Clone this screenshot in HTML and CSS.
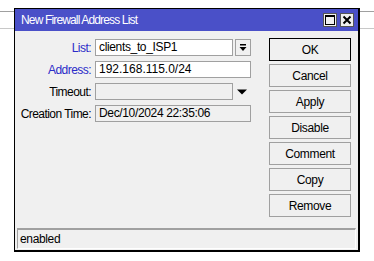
FILE: index.html
```html
<!DOCTYPE html>
<html>
<head>
  <title>New Firewall Address List</title>
  <link rel="stylesheet" href="styles.css">
</head>
<body>
  <div class="window">
    <div class="titlebar">
      <span class="title">New Firewall Address List</span>
      <div class="title-buttons">
        <span class="tbtn">
          <svg width="12" height="12" viewBox="0 0 12 12"><rect x="1.5" y="1.5" width="9" height="9" fill="none" stroke="#000" stroke-width="1"/><line x1="1" y1="2" x2="11" y2="2" stroke="#000" stroke-width="2"/></svg>
        </span>
        <span class="tbtn">
          <svg width="12" height="12" viewBox="0 0 12 12"><path d="M2.5 2.5 L9.5 9.5 M9.5 2.5 L2.5 9.5" stroke="#000" stroke-width="2"/></svg>
        </span>
      </div>
    </div>

    <div class="content">
      <div class="fields">
        <div class="row">
          <label class="label link">List:</label>
          <div class="field short">clients_to_ISP1</div>
          <span class="drop-btn">
            <svg width="10" height="10" viewBox="0 0 10 10"><rect x="2" y="1" width="6" height="1.5" fill="#000"/><path d="M1.5 4 H8.5 L5 8 Z" fill="#000"/></svg>
          </span>
        </div>
        <div class="row">
          <label class="label link">Address:</label>
          <div class="field wide digits">192.168.115.0/24</div>
        </div>
        <div class="row">
          <label class="label">Timeout:</label>
          <div class="field short disabled"></div>
          <span class="arrow">
            <svg width="12" height="8" viewBox="0 0 12 8"><path d="M1 1.5 H11 L6 6.5 Z" fill="#000"/></svg>
          </span>
        </div>
        <div class="row">
          <label class="label">Creation Time:</label>
          <div class="field wide disabled">Dec/10/2024 22:35:06</div>
        </div>
      </div>

      <div class="buttons">
        <button class="btn default">OK</button>
        <button class="btn">Cancel</button>
        <button class="btn">Apply</button>
        <button class="btn">Disable</button>
        <button class="btn">Comment</button>
        <button class="btn">Copy</button>
        <button class="btn">Remove</button>
      </div>
    </div>

    <div class="statusbar">enabled</div>
  </div>
</body>
</html>
```

FILE: styles.css
```css
/* desktop behind the dialog */
body {
  margin: 0;
  font-family: "Liberation Sans", Arial, sans-serif;
  font-size: 12px;
  letter-spacing: -0.35px;
  color: #000;
  background-color: #fff;
  background-image:
    linear-gradient(#a0a0a0, #a0a0a0),
    linear-gradient(#c8c8c8, #c8c8c8);
  background-size: 100% 1px, 100% 1px;
  background-position: 0 11px, 0 28px;
  background-repeat: no-repeat;
}

.window {
  margin: 8px 0 0 14px;
  width: 346px;
  height: 244px;
  box-sizing: border-box;
  border: 1px solid #000;
  border-right-width: 2px;
  border-bottom-width: 2px;
  background-color: #f0f0f0;
  display: flex;
  flex-direction: column;
}

.titlebar {
  height: 22px;
  background-color: #4a50c8;
  color: #fff;
  font-size: 12px;
  letter-spacing: -0.85px;
  padding: 0 4px 0 6px;
  display: flex;
  align-items: center;
  justify-content: space-between;
}

.title-buttons {
  display: flex;
  gap: 3px;
}

.tbtn {
  width: 14px;
  height: 14px;
  background-color: #f0f0f0;
  border: 1px solid #555;
  box-sizing: border-box;
  display: flex;
  align-items: center;
  justify-content: center;
}

.content {
  flex: 1;
  display: flex;
  padding: 7px 7px 0 2px;
}

.fields {
  flex: 1;
  display: flex;
  flex-direction: column;
  gap: 5px;
  padding-top: 1px;
}

.row {
  display: flex;
  align-items: center;
  height: 17px;
}

.label {
  width: 74px;
  margin-right: 4px;
  text-align: right;
  white-space: nowrap;
  letter-spacing: -0.55px;
}

.label.link {
  color: #2b2bc8;
}

.field {
  height: 17px;
  box-sizing: border-box;
  border: 1px solid #a0a0a0;
  background-color: #fff;
  padding: 0 3px;
  line-height: 15px;
  white-space: nowrap;
}

.field.digits {
  letter-spacing: 0;
}

.field.short {
  width: 138px;
}

.field.wide {
  width: 156px;
}

.field.disabled {
  background-color: #f0f0f0;
}

.drop-btn {
  width: 16px;
  height: 17px;
  margin-left: 2px;
  box-sizing: border-box;
  border: 1px solid #a0a0a0;
  display: flex;
  align-items: center;
  justify-content: center;
}

.arrow {
  width: 18px;
  display: flex;
  justify-content: center;
}

.buttons {
  width: 82px;
  display: flex;
  flex-direction: column;
  gap: 3px;
}

.btn {
  height: 23px;
  font-family: inherit;
  font-size: 12px;
  letter-spacing: inherit;
  color: #000;
  background-color: #f0f0f0;
  border: 1px solid #a0a0a0;
  padding: 0;
}

.btn.default {
  border-color: #000;
}

.statusbar {
  margin: 0 2px 1px 2px;
  height: 21px;
  box-sizing: border-box;
  border-top: 2px solid #a0a0a0;
  border-left: 1px solid #a0a0a0;
  border-right: 1px solid #fff;
  border-bottom: 1px solid #fff;
  padding: 0 2px;
  line-height: 18px;
}
```
